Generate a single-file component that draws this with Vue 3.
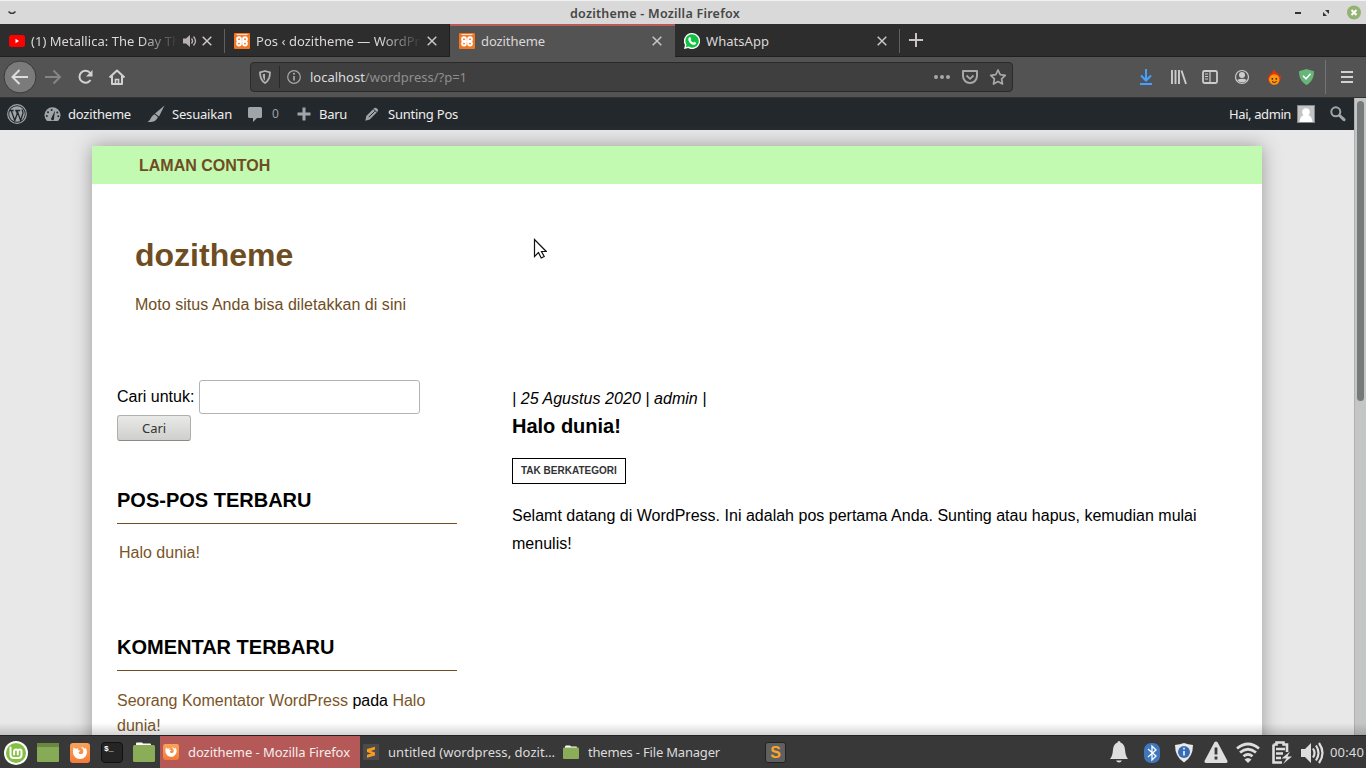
<script setup>
// Stretches or tightens a label's tracking so that it fills the given width.
const vFit = {
  mounted(el, { value }) {
    const n = el.textContent.length
    el.style.letterSpacing = (value - el.getBoundingClientRect().width) / n + 'px'
  }
}
const tabs = [
  { icon: 'yt', label: '(1) Metallica: The Day Th', w: 149, fade: true, audio: true },
  { icon: 'xampp', label: 'Pos ‹ dozitheme — WordPr', w: 164, fade: true },
  { icon: 'xampp', label: 'dozitheme', w: 64, active: true },
  { icon: 'wa', label: 'WhatsApp', w: 63 }
]
</script>

<template>
  <div class="desktop">
    <header class="titlebar">
      <svg class="tb-menu" viewBox="0 0 10 6"><path d="M1.500 1.500L3.500 3.200h3L8.500 1.500" fill="none" stroke="#3c3c3c" stroke-width="1.600" /></svg>
      <span class="tb-title"><span v-fit="170">dozitheme - Mozilla Firefox</span></span>
      <svg class="tb-ctl" viewBox="0 0 72 24">
        <path d="M1 12h6" stroke="#333" stroke-width="2" />
        <path d="M31 9h4v4zM29 11v4h4z" fill="#333" />
        <circle cx="60" cy="11.500" r="7" fill="#92b372" />
        <path d="M57.500 9l5 5m0-5l-5 5" stroke="#fff" stroke-width="2" />
      </svg>
    </header>

    <nav class="tabs">
      <div v-for="(t, i) in tabs" :key="i" class="tab" :class="{ active: t.active, first: i === 0, last: i === 3 }">
        <svg class="fav" viewBox="0 0 16 16">
          <template v-if="t.icon === 'yt'">
            <rect y="2" width="16" height="12" rx="2.500" fill="#f00" /><path d="M6.500 5.800v4.400L10 8z" fill="#fff" />
          </template>
          <template v-else-if="t.icon === 'xampp'">
            <rect width="16" height="16" rx="1" fill="#f37623" />
            <path d="M2.500 1.600h11" stroke="#ffe9da" stroke-width="1" />
            <g fill="none" stroke="#fff" stroke-width="1.900">
              <circle cx="5" cy="6.200" r="1.900" /><circle cx="11" cy="6.200" r="1.900" />
              <circle cx="5" cy="10.600" r="1.900" /><circle cx="11" cy="10.600" r="1.900" />
              <path d="M5 8.400h6" stroke-width="2" />
            </g>
          </template>
          <template v-else>
            <path d="M8 0a8 8 0 1 1-3.800 15L0 16l1-4A8 8 0 0 1 8 0z" fill="#fff" />
            <path d="M8 1.300a6.700 6.700 0 1 1-3.600 12.300l-2.600.6.700-2.500A6.700 6.700 0 0 1 8 1.300z" fill="#12c143" />
            <path d="M5.200 4.300l1-.2 1 2-.7 1c.6 1.200 1.400 2 2.700 2.600l.9-1 2 1c.1 1.500-1 2.200-2.300 2.100-2.800-.4-5.300-2.900-5.500-5.400 0-.9.300-1.600.9-2.100z" fill="#fff" />
          </template>
        </svg>
        <span class="tab-label" :class="{ fade: t.fade }"><span v-fit="t.w">{{ t.label }}</span></span>
        <svg v-if="t.audio" class="audio" viewBox="0 0 14 14">
          <path d="M0 4.500h3L7 1v12L3 9.500H0z" fill="#b9b1b1" />
          <path d="M8.500 4.500q2 2.500 0 5M10.500 2.500q4 4.500 0 9" fill="none" stroke="#b9b1b1" stroke-width="1.400" />
        </svg>
        <svg class="close" viewBox="0 0 10 10"><path d="M.7.7l8.600 8.600m0-8.600L.7 9.300" stroke="#cdc6c6" stroke-width="1.500" /></svg>
      </div>
      <svg class="newtab" viewBox="0 0 14 14"><path d="M7 0v14M0 7h14" stroke="#cbc3c3" stroke-width="2" /></svg>
    </nav>

    <div class="toolbar">
      <svg class="nav-icons" viewBox="0 0 140 40">
        <circle cx="20" cy="20" r="16" fill="#7b7b7b" stroke="#393939" />
        <path d="M28 20H13m6.500-7L12.500 20l7 7" fill="none" stroke="#ddd" stroke-width="2" />
        <path d="M45 20h15m-6.500-6.500L60 20l-6.500 6.500" fill="none" stroke="#858585" stroke-width="2" />
        <path d="M90.200 16a6 6 0 1 0 .3 7" fill="none" stroke="#d2d2d2" stroke-width="2" />
        <path d="M92.500 13v6.500H86z" fill="#d2d2d2" />
        <path d="M109.500 20.500l7.500-7 7.500 7M112 19v8h10v-8" fill="none" stroke="#d2d2d2" stroke-width="2" stroke-linejoin="round" />
        <path d="M115.500 27v-4.500h3V27" fill="none" stroke="#d2d2d2" stroke-width="1.600" />
      </svg>
      <div class="urlbar">
        <svg class="shield" viewBox="0 0 12 14"><path d="M6 1l5 1.300C11 8 9.500 11 6 13 2.500 11 1 8 1 2.300z" fill="none" stroke="#b3b3b3" stroke-width="1.800" stroke-linejoin="round" /><path d="M6 3.700v7C4.300 9 3.700 7.500 3.700 4.300z" fill="#b3b3b3" /></svg>
        <i class="url-sep"></i>
        <svg class="info" viewBox="0 0 14 14"><circle cx="7" cy="7" r="6.300" fill="none" stroke="#a8a8a8" stroke-width="1.200" /><path d="M7 6v4.500" stroke="#b0b0b0" stroke-width="1.600" /><circle cx="7" cy="3.800" r="1" fill="#b0b0b0" /></svg>
        <span class="url"><span v-fit="157"><b>localhost</b>/wordpress/?p=1</span></span>
        <svg class="url-actions" viewBox="0 0 74 20">
          <g fill="#a8a8a8"><circle cx="3" cy="10" r="2" /><circle cx="9" cy="10" r="2" /><circle cx="15" cy="10" r="2" /></g>
          <path d="M30 4h14v5a7 7 0 0 1-14 0z" fill="none" stroke="#a8a8a8" stroke-width="2" stroke-linejoin="round" /><path d="M33.500 8.500l3.500 3.300 3.500-3.300" fill="none" stroke="#a8a8a8" stroke-width="1.800" />
          <path d="M65 3l2.200 4.700 5.100.7-3.700 3.500.9 5.100-4.500-2.500-4.500 2.500.9-5.100-3.700-3.500 5.100-.7z" fill="none" stroke="#a8a8a8" stroke-width="1.700" stroke-linejoin="round" />
        </svg>
      </div>
      <svg class="tools" viewBox="0 0 230 40">
        <path d="M10 12v12m-5-5.500l5 5 5-5M4 27h12" fill="none" stroke="#45a1ff" stroke-width="2" />
        <path d="M36 13v14M39.500 13v14M43 13v14M45.500 13.500L50 27" stroke="#ccc" stroke-width="1.900" />
        <rect x="67" y="14" width="14" height="12" rx="1.500" fill="none" stroke="#ccc" stroke-width="1.800" /><path d="M74 14v12M69 17h3M69 19.500h3M69 22h3" stroke="#ccc" stroke-width="1.200" />
        <circle cx="106" cy="20" r="6.500" fill="none" stroke="#ccc" stroke-width="1.200" /><circle cx="106" cy="18" r="3" fill="#ccc" /><path d="M101 23q5-2.500 10 0-5 5-10 0z" fill="#ccc" />
        <path d="M138 12q1 3 3 4 2 1 2.500 3l1-1c1 5-1.500 9.500-6.500 9.500s-7-4.500-6-8l1 1c0-3 1-3.500 2-4.500l.5 1z" fill="#e8320c" />
        <circle cx="138.300" cy="22.500" r="5.200" fill="#fb970f" /><circle cx="136.300" cy="21.800" r=".9" fill="#402014" /><circle cx="140.300" cy="21.800" r=".9" fill="#402014" /><path d="M136 24.500q2.300 2 4.600 0" stroke="#402014" fill="none" />
        <path d="M170.500 12l7.500 2.200C178 21 175.500 25 170.500 28c-5-3-7.500-7-7.500-13.800z" fill="#67b579" /><path d="M167 18.800l3 3 4.500-5" fill="none" stroke="#fff" stroke-width="1.500" />
        <path d="M189.500 3v34" stroke="#747474" />
        <path d="M205 15h12M205 20h12M205 25h12" stroke="#d2d2d2" stroke-width="2" />
      </svg>
    </div>

    <section class="viewport">
      <div class="page">
        <div class="adminbar">
          <svg class="ab-wp" viewBox="0 0 20 20"><circle cx="10" cy="10" r="9.300" fill="none" stroke="#a0a5aa" stroke-width="1.200" /><circle cx="10" cy="10" r="7.800" fill="#a0a5aa" /><path d="M2.500 6.500h4.200M8.200 6.500h5M4.400 7l3.400 9.500L10.300 9.500 9.300 7M10.300 7l3.300 9.500 2.300-7c.5-2-.7-2.800-.8-4" stroke="#23282d" stroke-width="1.300" fill="none" /></svg>
          <svg class="ab-dash" viewBox="0 0 17 16"><path d="M2.500 14.500A8 8 0 1 1 14.500 14.500L13.500 15h-10z" fill="#a0a5aa" /><path d="M11 4.500l-1 8a1.500 1.500 0 1 1-2.500-.8z" fill="#23282d" /><g fill="#23282d"><circle cx="4" cy="6.300" r="1" /><circle cx="7.600" cy="4.100" r="1" /><circle cx="2.800" cy="10" r="1" /><circle cx="13.300" cy="6.500" r="1" /><circle cx="14.300" cy="10.300" r="1" /></g></svg>
          <span class="ab1"><span v-fit="63">dozitheme</span></span>
          <svg class="ab-brush" viewBox="0 0 18 18"><path d="M17.500.5L12 11.500 8 8.500zM7.500 9.200l3.400 2.900C9.500 16.500 5 17.500.5 17 3.500 15.500 4 11 7.500 9.200z" fill="#a0a5aa" /></svg>
          <span class="ab2"><span v-fit="60">Sesuaikan</span></span>
          <svg class="ab-com" viewBox="0 0 14 15"><path d="M1.500 0h11Q14 0 14 1.500v8Q14 11 12.500 11H9l-4 4v-4H1.500Q0 11 0 9.500v-8Q0 0 1.500 0z" fill="#a0a5aa" /></svg>
          <span class="ab3"><span v-fit="8">0</span></span>
          <svg class="ab-plus" viewBox="0 0 14 14"><path d="M7 .5v13M.5 7h13" stroke="#a0a5aa" stroke-width="3" /></svg>
          <span class="ab4"><span v-fit="28">Baru</span></span>
          <svg class="ab-pen" viewBox="0 0 14 14"><path d="M.3 13.700l1-4.700L9.300 1.100q1.300-1 2.600.3l.7.700q1.100 1.100 0 2.500l-7.900 8z" fill="#a0a5aa" /><path d="M3.800 10.200L9.800 4.200M8.600 2.200l3.200 3.200" stroke="#23282d" stroke-width="1" /></svg>
          <span class="ab5"><span v-fit="70">Sunting Pos</span></span>
          <span class="ab-user"><span v-fit="62">Hai, admin</span></span>
          <svg class="avatar" viewBox="0 0 18 18"><rect x=".5" y=".5" width="17" height="17" fill="#c3c3c3" stroke="#82878c" /><circle cx="9" cy="7" r="3.800" fill="#fff" /><path d="M2.500 17q.5-6 4.500-7h4q4 1 4.500 7z" fill="#fff" /></svg>
          <svg class="ab-search" viewBox="0 0 16 16"><circle cx="5.800" cy="5.800" r="4.500" fill="none" stroke="#a0a5aa" stroke-width="2" /><path d="M9.500 9.500l4.500 4.200" stroke="#a0a5aa" stroke-width="3" stroke-linecap="round" /></svg>
        </div>

        <main class="sheet">
          <div class="menu"><a>LAMAN CONTOH</a></div>
          <div class="brand">
            <h1>dozitheme</h1>
            <p><span v-fit="271">Moto situs Anda bisa diletakkan di sini</span></p>
          </div>
          <div class="cols">
            <aside>
              <div class="search"><label>Cari untuk:</label><span class="field"></span></div>
              <span class="btn"><span v-fit="24">Cari</span></span>
              <h2>POS-POS TERBARU</h2>
              <p class="recent">Halo dunia!</p>
              <h2 class="second">KOMENTAR TERBARU</h2>
              <p class="comment">Seorang Komentator WordPress <b>pada</b> Halo dunia!</p>
            </aside>
            <article>
              <div class="meta"><span v-fit="194.500">| 25 Agustus 2020 | admin |</span></div>
              <h3>Halo dunia!</h3>
              <span class="cat">TAK BERKATEGORI</span>
              <p>Selamt datang di WordPress. Ini adalah pos pertama Anda. Sunting atau hapus, kemudian mulai menulis!</p>
            </article>
          </div>
        </main>
      </div>
      <div class="scroll"><i></i></div>
      <div class="panel-shade"></div>
    </section>

    <footer class="panel">
      <svg class="launchers" viewBox="0 0 160 33">
        <defs>
          <linearGradient id="or" x2="0" y2="1"><stop stop-color="#fba35b" /><stop offset="1" stop-color="#f47a35" /></linearGradient>
          <g id="ff"><rect width="20" height="20" rx="3" fill="url(#or)" /><path d="M3.500 4.500l2.300 1.300q1.500-.6 3-.3-1 .7-1.100 1.700l2.600.4q-.2 1-1.700 1.500-.4 1.700 1.300 2 1.500 0 2.600-.3 1.500-1.500.6-3.800-.7-1.800-2.300-3.300 3.200.5 4.200 2.300l.5-1.500q1.800 2.500 1.500 5.500-.5 3.500-3.500 5.200-4.500 2-8-.8-3-2.700-2.500-6.400.2-1.700.5-3.500z" fill="#fff" /></g>
        </defs>
        <circle cx="16" cy="17" r="12" fill="#fff" /><circle cx="16" cy="17" r="10" fill="#86be43" />
        <path d="M10.500 11.500v7q0 3.500 3.500 3.500h4q3.500 0 3.500-3.500v-3q0-2-1.800-2t-1.900 2v3m0-3q0-2-1.800-2t-1.900 2v3" fill="none" stroke="#fff" stroke-width="2" stroke-linecap="round" />
        <rect x="37" y="7" width="22" height="19" rx="1" fill="#87aa56" /><rect x="37" y="7" width="22" height="4" fill="#67883e" />
        <use href="#ff" x="70" y="7" />
        <rect x="101.500" y="6.500" width="21" height="20" rx="3.500" fill="#252525" stroke="#111" /><text x="104" y="15" class="prompt">$_</text>
        <path d="M136 7.500q0-1 1-1h5l1 1h7q1 0 1 1v2h-15z" fill="#fff" /><rect x="133" y="9" width="22" height="17" rx="1.500" fill="#8bad58" />
      </svg>
      <div class="task on"><svg class="ti" viewBox="0 0 20 20"><use href="#ff" /></svg><span v-fit="162">dozitheme - Mozilla Firefox</span></div>
      <div class="task"><svg class="ti" viewBox="0 0 16 16"><rect width="16" height="16" rx="1" fill="#4b4b4b" /><path d="M12 2.800v2.800L7.800 7l4.200 1.400v3.200L4 13.700v-2.900l4.200-1.400L4 8V5z" fill="#f89a20" /></svg><span v-fit="167">untitled (wordpress, dozit…</span></div>
      <div class="task"><svg class="ti" viewBox="0 0 16 16"><path d="M2 3q0-1.500 1-1.500h4l1 1h5q1 0 1 1V6H2z" fill="#fff" /><rect y="3.500" width="16" height="11.500" rx="1" fill="#8bad58" /></svg><span v-fit="132">themes - File Manager</span></div>
      <span class="sublime">S</span>
      <svg class="tray" viewBox="0 0 220 33">
        <g fill="#dedede">
          <path d="M13 5q1.500 0 1.500 1.500 4 1.500 4.500 7 .5 7 3 9.500H4q2.500-2.500 3-9.500.5-5.500 4.500-7Q11.500 5 13 5zM10 24.500h6q-1 2-3 2t-3-2z" />
          <path d="M110 5.500q1 0 1.700 1L121.500 25q.5 2-1.500 2h-20q-2 0-1.500-2l9.800-18.500q.7-1 1.700-1z" />
        </g>
        <rect x="38" y="7" width="16" height="20" rx="7" fill="#3f77bd" /><path d="M42 13l8 7-4 4V10l4 4-8 7" fill="none" stroke="#fff" stroke-width="1.300" />
        <path d="M78 7q4 1.500 9 2 0 12-9 17.500Q69 21 69 9q5-.5 9-2z" fill="#e8e8e8" /><circle cx="78" cy="16" r="6" fill="#366eb3" /><path d="M78 15v4.500M78 11.800v1.700" stroke="#fff" stroke-width="1.500" />
        <path d="M110 11.500v7M110 20.500v3" stroke="#383838" stroke-width="2.800" />
        <path d="M131 12.500q11-9 22 0M134 16.500q8-6.500 16 0M137.500 20.300q4.500-3.800 9 0" fill="none" stroke="#dedede" stroke-width="2.800" /><path d="M142 27l-3.500-3.500q3.500-3 7 0z" fill="#dedede" />
        <path d="M167.500 8.500h3v-2h7v2h3.500V16M176 26.500h-8.500v-18M170 13h9M170 17.500h7M170 22h5" fill="none" stroke="#dedede" stroke-width="2.600" /><path d="M184 15.500l-8.500 7h5l-3.500 5.500 9-7.500h-4.500z" fill="#dedede" />
        <path d="M195 13h4l6-6v20l-6-6h-4z" fill="#dedede" /><path d="M207 12.500q3 4.500 0 9M210 9.500q5 7.500 0 15M213 7q7 10 0 20" fill="none" stroke="#dedede" stroke-width="2.200" />
      </svg>
      <span class="clock"><span v-fit="34">00:40</span></span>
    </footer>

    <svg class="cursor" viewBox="0 0 14 22"><path d="M1.500 1.500v17l4-4 2.700 5.500 3-1.500L8.500 13.500h4.800z" fill="#fff" stroke="#111" stroke-width="1.200" /></svg>
  </div>
</template>

<style>
html, body { overflow: hidden; }
</style>

<style scoped>
* { box-sizing: border-box; }
svg { display: block; flex: none; }
.desktop { position: relative; width: 1366px; height: 768px; display: flex; flex-direction: column; font: 13px/18px "Noto Sans", sans-serif; white-space: nowrap; overflow: hidden; background: #e8e8e8; }
.titlebar { height: 24px; flex: none; background: #d9d9d9; border-top: 1px solid #f2f2f2; display: flex; align-items: center; }
.tb-menu { width: 10px; height: 6px; margin-left: 7px; }
.tb-title { flex: 1; padding-left: 553px; color: #464646; font-weight: 600; font-size: 12.500px; padding-top: 2px; }
.tb-ctl { width: 72px; height: 24px; }
.tabs { height: 33px; flex: none; background: #2d2d2d; display: flex; border-bottom: 1px solid #202020; }
.tab { width: 225px; height: 33px; display: flex; align-items: center; padding: 1px 13px 0 9px; color: #dcd8d8; position: relative; }
.tab.first::after, .tab.last::after { content: ""; position: absolute; right: 0; top: 5px; width: 1px; height: 24px; background: #606060; }
.tab.active { background: #535353; border-top: 2px solid #b85a57; padding: 0 13px 1px 9px; box-shadow: -1px 0 #202020; }
.fav { width: 16px; height: 16px; margin-right: 6px; }
.tab-label { flex: 1; overflow: hidden; }
.fade { -webkit-mask-image: linear-gradient(90deg, #000 75%, transparent 100%); mask-image: linear-gradient(90deg, #000 75%, transparent 100%); margin-right: 5px; }
.audio { width: 14px; height: 14px; margin-right: 5px; }
.close { width: 10px; height: 10px; }
.newtab { width: 14px; height: 14px; margin: 9px 0 0 9px; }
.toolbar { height: 41px; flex: none; background: #535353; border-bottom: 1px solid #323232; display: flex; align-items: center; }
.nav-icons { width: 140px; height: 40px; }
.urlbar { width: 763px; height: 30px; margin-left: 110px; background: #3f3f3f; border: 1px solid #2a2a2a; border-radius: 4px; display: flex; align-items: center; color: #8f8f8f; }
.shield { width: 12px; height: 14px; margin-left: 8px; }
.url-sep { width: 1px; height: 22px; background: #292929; margin: 0 7px 0 8px; }
.info { width: 14px; height: 14px; margin-right: 9px; }
.url { flex: 1; }
.url b { font-weight: 400; color: #dedede; }
.url-actions { width: 74px; height: 20px; margin-right: 5px; }
.tools { width: 230px; height: 40px; margin-left: 123px; }
.viewport { flex: 1; min-height: 0; display: flex; position: relative; }
.panel-shade { position: absolute; left: 0; right: 0; bottom: 0; height: 12px; background: linear-gradient(transparent, rgba(0, 0, 0, .17)); }
.page { width: 1354px; height: 637px; overflow: hidden; background: #e8e8e8; }
.scroll { width: 12px; background: #c4c6c5; border-left: 1px solid #b0b0b0; padding: 3px 2px 0; }
.scroll i { display: block; width: 7px; height: 300px; border-radius: 4px; background: #777a7a; }
.adminbar { height: 32px; background: #23282d; color: #eee; display: flex; align-items: center; padding-left: 7px; }
.ab-wp { width: 20px; height: 20px; }
.ab-dash { width: 17px; height: 16px; margin: 0 7px 0 17px; }
.ab1 { width: 79px; }
.ab-brush { width: 18px; height: 18px; margin-right: 7px; }
.ab2 { width: 76px; }
.ab-com { width: 14px; height: 15px; margin-right: 10px; }
.ab3 { width: 25px; color: #9ca2a7; font-size: 12px; }
.ab-plus { width: 14px; height: 14px; margin-right: 8px; }
.ab4 { width: 46px; }
.ab-pen { width: 14px; height: 14px; margin-right: 9px; }
.ab5 { flex: 1; }
.ab-user { width: 68px; }
.avatar { width: 18px; height: 18px; margin-right: 15px; }
.ab-search { width: 16px; height: 16px; margin-right: 8px; }
.sheet { width: 1170px; height: 700px; margin: 16px 0 0 92px; background: #fff; box-shadow: 0 0 18px #999; font: 16px/25px "Liberation Sans", sans-serif; color: #000; }
.menu { height: 38px; background: #c3fab1; padding-left: 47px; font-weight: 700; line-height: 40px; color: #6f4d23; }
.brand { height: 195px; padding: 51px 0 0 43px; color: #6f4d23; }
h1 { margin: 0; font-size: 32px; line-height: 40px; }
.brand p { margin: 17px 0 0; }
.cols { display: flex; white-space: normal; }
aside { width: 395px; padding: 1px 0 0 25px; }
.search { display: flex; align-items: center; height: 34px; }
.search label { padding-bottom: 2px; }
.field { width: 221px; height: 34px; border: 1px solid #b3b3b3; border-radius: 3px; margin-left: 5px; }
.btn { display: flex; justify-content: center; width: 74px; height: 26px; margin-top: 1px; border: 1px solid #b0b0ae; border-bottom-color: #8b8b86; border-radius: 3px; background: linear-gradient(#e9e9e8, #cfcfcd); font: 13px/25px "Noto Sans", sans-serif; color: #333; }
h2 { width: 340px; height: 40px; margin: 43px 0 0; font-size: 20px; line-height: 32px; border-bottom: 1px solid #6f4d23; }
.recent { margin: 16px 0 0 2px; color: #7a5527; }
h2.second { margin-top: 66px; }
.comment { width: 340px; margin: 17px 0 0; color: #7a5527; }
.comment b { font-weight: 400; color: #000; }
article { width: 720px; padding: 7px 0 0 25px; }
.meta { font-style: italic; line-height: 25px; }
h3 { margin: 0; font-size: 20px; line-height: 30px; }
.cat { display: block; width: 114px; height: 26px; margin-top: 17px; border: 1px solid #000; padding-left: 8px; font-size: 10px; line-height: 23px; font-weight: 700; color: #333; white-space: nowrap; }
article p { width: 690px; margin: 18px 0 0; line-height: 28px; letter-spacing: .01px; }
.panel { height: 33px; flex: none; background: #383838; border-top: 1px solid #222; display: flex; align-items: center; color: #dcdcdc; }
.launchers { width: 160px; height: 33px; }
.prompt { font: bold 8px "Liberation Mono", monospace; fill: #fff; }
.task { width: 200px; height: 32px; display: flex; align-items: center; padding-left: 3px; }
.task.on { background: #b45957; color: #f5eeee; }
.ti { width: 16px; height: 16px; margin-right: 9px; }
.sublime { width: 21px; height: 21px; margin-left: 5px; border: 1px solid #222; border-radius: 3px; background: #606060; color: #f9a52b; font: bold 16px/19px "Liberation Sans", sans-serif; text-align: center; }
.tray { width: 220px; height: 33px; margin-left: 320px; }
.clock { margin-left: 4px; }
.cursor { position: absolute; left: 533px; top: 238px; width: 14px; height: 22px; }
</style>
